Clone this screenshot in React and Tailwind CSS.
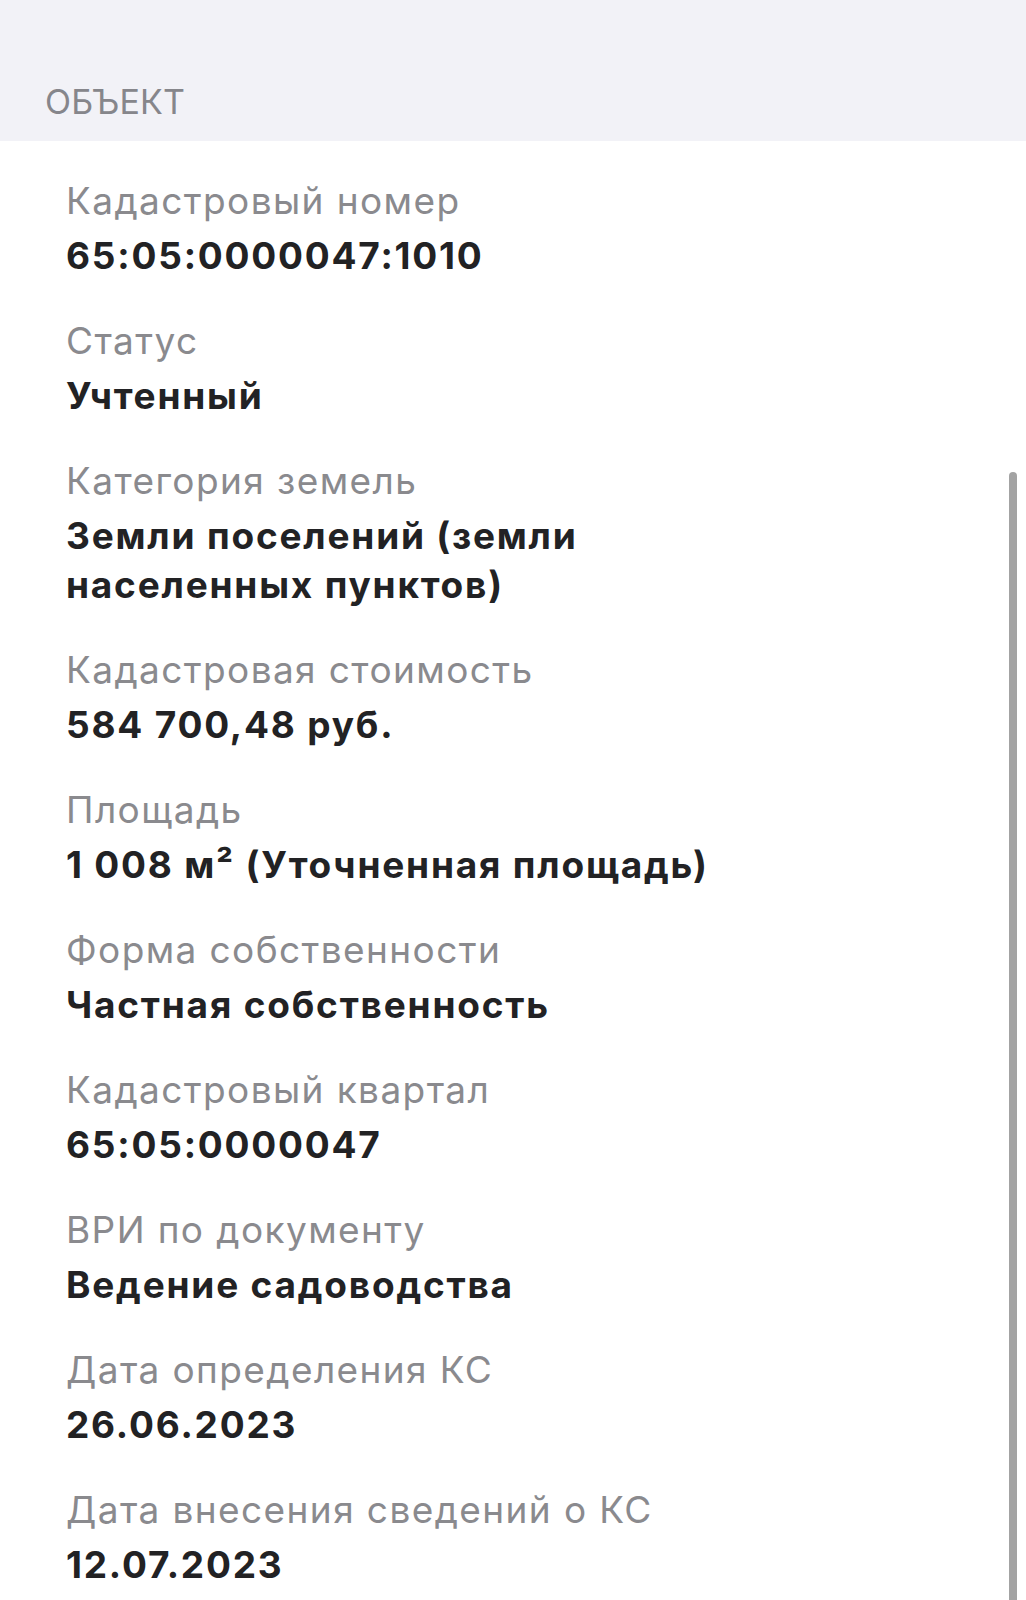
import React from "react";

const items = [
  ["Кадастровый номер", ["65:05:0000047:1010"]],
  ["Статус", ["Учтенный"]],
  ["Категория земель", ["Земли поселений (земли", "населенных пунктов)"]],
  ["Кадастровая стоимость", ["584 700,48 руб."]],
  ["Площадь", ["1 008 м² (Уточненная площадь)"]],
  ["Форма собственности", ["Частная собственность"]],
  ["Кадастровый квартал", ["65:05:0000047"]],
  ["ВРИ по документу", ["Ведение садоводства"]],
  ["Дата определения КС", ["26.06.2023"]],
  ["Дата внесения сведений о КС", ["12.07.2023"]],
];

export default function App() {
  return (
    <div
      className="relative w-[1026px] h-[1600px] overflow-hidden bg-white"
      style={{ fontFamily: "Inter, 'Noto Sans', sans-serif" }}
    >
      <div className="bg-[#f2f2f7] h-[141px] pt-[82px] pl-[45px]">
        <div className="text-[34px] leading-[40px] text-[#86868b] tracking-[0.2px]">ОБЪЕКТ</div>
      </div>
      <div className="flex flex-col gap-[35px] pt-[34px] pl-[66px]">
        {items.map(([label, vals]) => (
          <div key={label} className="flex flex-col">
            <div className="text-[37px] leading-[52px] text-[#8a8a8e] tracking-[1.4px]">{label}</div>
            <div className="mt-[4px] flex flex-col">
              {vals.map((v) => (
                <div key={v} className="text-[37px] leading-[49px] font-bold text-[#222224] tracking-[1.8px]">
                  {v}
                </div>
              ))}
            </div>
          </div>
        ))}
      </div>
      <div className="absolute left-[1009px] top-[472px] w-[8px] h-[1200px] rounded-full bg-[#a3a3a3]" />
    </div>
  );
}
